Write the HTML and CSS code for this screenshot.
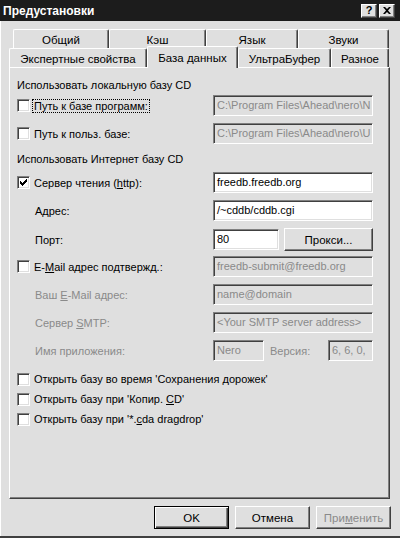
FILE: index.html
```html
<!DOCTYPE html>
<html lang="ru">
<head>
    <meta charset="UTF-8">
    <title>Предустановки</title>
    <link rel="stylesheet" href="styles.css">
</head>
<body>
    <div class="window">
        <div class="titlebar">
            <span class="title">Предустановки</span>
            <div class="title-buttons">
                <span class="tbtn">?</span>
                <span class="tbtn">
                    <svg width="8" height="7" viewBox="0 0 8 7"><path d="M0 0h2l2 2 2-2h2L5 3.5 8 7H6L4 5 2 7H0l3-3.5z" fill="#000"/></svg>
                </span>
            </div>
        </div>

        <div class="dialog">
            <div class="tabs">
                <div class="tab-row back">
                    <div class="tab" style="width:96px">Общий</div>
                    <div class="tab" style="width:97px">Кэш</div>
                    <div class="tab" style="width:92px">Язык</div>
                    <div class="tab" style="width:91px">Звуки</div>
                </div>
                <div class="tab-row front">
                    <div class="tab" style="width:138px">Экспертные свойства</div>
                    <div class="tab active" style="width:91px">База данных</div>
                    <div class="tab" style="width:93px">УльтраБуфер</div>
                    <div class="tab" style="width:58px">Разное</div>
                </div>
            </div>

            <div class="panel">
                <div class="group-title first">Использовать локальную базу CD</div>
                <div class="row">
                    <label class="check"><span class="box"></span><span class="focus">Путь к базе программ:</span></label>
                    <div class="field disabled">C:\Program Files\Ahead\nero\N</div>
                </div>
                <div class="row">
                    <label class="check"><span class="box"></span><span>Путь к польз. базе:</span></label>
                    <div class="field disabled">C:\Program Files\Ahead\nero\U</div>
                </div>

                <div class="group-title">Использовать Интернет базу CD</div>
                <div class="row">
                    <label class="check"><span class="box checked">
                        <svg width="7" height="7" viewBox="0 0 7 7"><path d="M0 2h1v1h1v1h1V3h1V2h1V1h1V0h1v3H6v1H5v1H4v1H3v1H2V6H1V5H0z" fill="#000"/></svg>
                    </span><span>Сервер чтения (<u>h</u>ttp):</span></label>
                    <div class="field">freedb.freedb.org</div>
                </div>
                <div class="row">
                    <span class="label">Адрес:</span>
                    <div class="field">/~cddb/cddb.cgi</div>
                </div>
                <div class="row">
                    <span class="label">Порт:</span>
                    <div class="split">
                        <div class="field port">80</div>
                        <div class="button proxy">Прокси...</div>
                    </div>
                </div>
                <div class="row">
                    <label class="check"><span class="box"></span><span>E-<u>M</u>ail адрес подтвержд.:</span></label>
                    <div class="field disabled">freedb-submit@freedb.org</div>
                </div>
                <div class="row">
                    <span class="label dim">Ваш <u>E</u>-Mail адрес:</span>
                    <div class="field disabled">name@domain</div>
                </div>
                <div class="row">
                    <span class="label dim">Сервер <u>S</u>MTP:</span>
                    <div class="field disabled">&lt;Your SMTP server address&gt;</div>
                </div>
                <div class="row">
                    <span class="label dim">Имя приложения:</span>
                    <div class="split">
                        <div class="field disabled app">Nero</div>
                        <span class="dim version-label">Версия:</span>
                        <div class="field disabled version">6, 6, 0,</div>
                    </div>
                </div>

                <div class="options">
                    <label class="check"><span class="box"></span><span>Открыть базу во время 'Сохранения дорожек'</span></label>
                    <label class="check"><span class="box"></span><span>Открыть базу при 'Копир. <u>C</u>D'</span></label>
                    <label class="check"><span class="box"></span><span>Открыть базу при '*.<u>c</u>da dragdrop'</span></label>
                </div>
            </div>

            <div class="actions">
                <div class="button default">OK</div>
                <div class="button">Отмена</div>
                <div class="button dim">При<u>м</u>енить</div>
            </div>
        </div>
    </div>
</body>
</html>
```

FILE: styles.css
```css
body {
    margin: 0;
    background-color: #dfdfdf;
    font-family: "Liberation Sans", Arial, sans-serif;
    font-size: 11px;
    color: #000;
}

.window {
    width: 400px;
    height: 538px;
    box-sizing: border-box;
    background-color: #dfdfdf;
    border-bottom: 2px solid #404040;
    display: flex;
    flex-direction: column;
}

.titlebar {
    height: 21px;
    background-color: #1c1c1c;
    display: flex;
    align-items: center;
    justify-content: space-between;
    padding: 0 5px 0 3px;
}

.title {
    color: #fff;
    font-weight: bold;
    font-size: 12px;
}

.title-buttons {
    display: flex;
    gap: 2px;
}

.tbtn {
    width: 16px;
    height: 14px;
    box-sizing: border-box;
    background-color: #dfdfdf;
    border: 1px solid;
    border-color: #fff #404040 #404040 #fff;
    box-shadow: inset -1px -1px #808080;
    display: flex;
    align-items: center;
    justify-content: center;
    font-weight: bold;
    font-size: 11px;
    line-height: 1;
}

.dialog {
    flex: 1;
    padding: 8px 10px 0 8px;
    border-left: 1px solid #fff;
    display: flex;
    flex-direction: column;
}

.tabs {
    display: flex;
    flex-direction: column;
}

.tab-row {
    display: flex;
    height: 19px;
}

.tab-row.back {
    padding-left: 4px;
}

.tab {
    box-sizing: border-box;
    height: 19px;
    padding-top: 4px;
    text-align: center;
    font-size: 11.5px;
    border-top: 1px solid #fff;
    border-left: 1px solid #fff;
    border-right: 1px solid #404040;
    box-shadow: inset -1px 0 #808080;
    border-radius: 2px 2px 0 0;
    background-color: #dfdfdf;
}

.tab.active {
    height: 22px;
    margin-top: -2px;
    padding-top: 5px;
    position: relative;
    z-index: 1;
}

.panel {
    height: 432px;
    box-sizing: border-box;
    border: 1px solid;
    border-color: #fff #404040 #404040 #fff;
    box-shadow: inset -1px -1px #808080;
    padding: 10px 0 0 7px;
}

.group-title {
    height: 14px;
    line-height: 14px;
    margin: 8px 0 6px;
}

.group-title.first {
    margin-top: 0;
    margin-bottom: 3px;
}

.row {
    display: grid;
    grid-template-columns: 196px 160px;
    align-items: center;
    height: 21px;
    margin-bottom: 7px;
}

.check {
    display: flex;
    align-items: center;
    gap: 4px;
    height: 14px;
}

.box {
    width: 13px;
    height: 13px;
    box-sizing: border-box;
    background-color: #fff;
    border: 1px solid;
    border-color: #808080 #fff #fff #808080;
    box-shadow: inset 1px 1px #404040, inset -1px -1px #dfdfdf;
    display: flex;
    align-items: center;
    justify-content: center;
}

.focus {
    outline: 1px dotted #000;
    outline-offset: 0;
    padding: 0 1px;
    margin-left: -1px;
}

.label {
    padding-left: 18px;
}

.dim {
    color: #8a8a8a;
}

.field {
    height: 21px;
    box-sizing: border-box;
    background-color: #fff;
    border: 1px solid;
    border-color: #808080 #fff #fff #808080;
    box-shadow: inset 1px 1px #404040, inset -1px -1px #dfdfdf;
    padding: 3px 0 0 3px;
    white-space: nowrap;
    overflow: hidden;
}

.field.disabled {
    background-color: #dfdfdf;
    color: #8a8a8a;
}

.split {
    display: flex;
    align-items: center;
}

.port {
    width: 66px;
}

.proxy {
    width: 89px;
    height: 24px;
    margin-left: 5px;
}

.app {
    width: 51px;
}

.version-label {
    margin-left: 6px;
    width: 58px;
}

.version {
    width: 45px;
}

.options {
    display: flex;
    flex-direction: column;
    gap: 6px;
    margin-top: 11px;
}

.button {
    box-sizing: border-box;
    height: 23px;
    display: flex;
    align-items: center;
    justify-content: center;
    border: 1px solid;
    border-color: #fff #404040 #404040 #fff;
    box-shadow: inset -1px -1px #808080;
    background-color: #dfdfdf;
    font-size: 11.5px;
}

.actions {
    display: flex;
    justify-content: flex-end;
    gap: 6px;
    margin-top: 7px;
    margin-right: -1px;
}

.actions .button {
    width: 75px;
}

.button.default {
    border: 1px solid #000;
    box-shadow: inset 1px 1px #fff, inset -1px -1px #404040, inset -2px -2px #808080;
}
```
